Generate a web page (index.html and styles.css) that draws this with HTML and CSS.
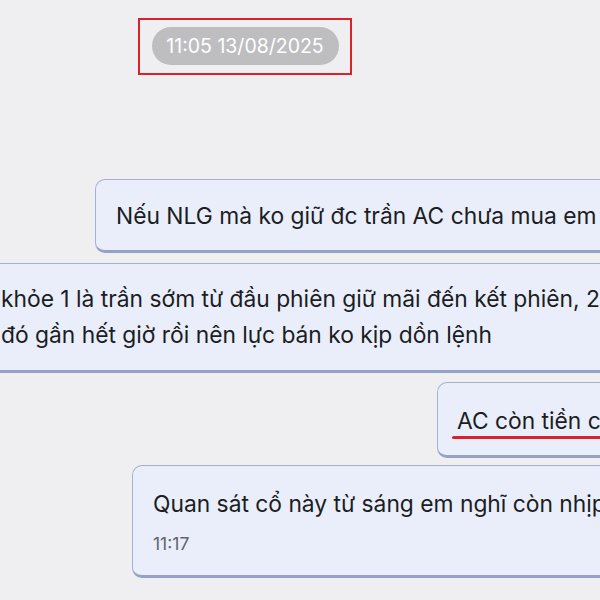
FILE: index.html
```html
<!doctype html>
<html>
  <head>
    <meta charset="utf-8">
    <title>chat</title>
    <link rel="stylesheet" href="styles.css">
  </head>
  <body>
    <main class="chat">
      <div class="stamp-row">
        <div class="stamp-mark">
          <span class="stamp">11:05 13/08/2025</span>
        </div>
      </div>
      <div class="row row-1">
        <div class="bubble b1">Nếu NLG mà ko giữ đc trần AC chưa mua em</div>
      </div>
      <div class="row row-2">
        <div class="bubble b2">
          <p>khỏe 1 là trần sớm từ đầu phiên giữ mãi đến kết phiên, 2</p>
          <p>đó gần hết giờ rồi nên lực bán ko kịp dồn lệnh</p>
        </div>
      </div>
      <div class="row row-3">
        <div class="bubble b3"><span class="marked">AC còn tiền chưa</span></div>
      </div>
      <div class="row row-4">
        <div class="bubble b4">
          <p>Quan sát cổ này từ sáng em nghĩ còn nhịp</p>
          <span class="time">11:17</span>
        </div>
      </div>
    </main>
  </body>
</html>
```

FILE: styles.css
```css
* {
  margin: 0;
  padding: 0;
  box-sizing: border-box;
}

html, body {
  width: 100%;
  height: 100%;
  overflow: hidden;
}

body {
  background-color: #efeff2;
  font-family: Inter, "Noto Sans", sans-serif;
  color: #1b1d22;
}

.chat {
  display: flex;
  flex-direction: column;
  width: 900px;
}

.stamp-row {
  padding-top: 18px;
  padding-left: 138px;
  display: flex;
}

.stamp-mark {
  width: 214px;
  height: 57px;
  border: 2px solid #d9222b;
  display: flex;
  align-items: center;
  justify-content: center;
}

.stamp {
  background-color: #bebec1;
  color: #fff;
  font-size: 19.5px;
  height: 38px;
  width: 187px;
  border-radius: 19px;
  display: flex;
  align-items: center;
  justify-content: center;
  margin-top: -1px;
}

.row {
  display: flex;
}

.bubble {
  background-color: #e9eefa;
  border: 1.5px solid #a6b1d2;
  border-bottom: 3px solid #95a1c6;
  border-radius: 10px;
  font-size: 22.8px;
  line-height: 28px;
  white-space: nowrap;
}

.row-1 {
  margin-top: 104px;
  padding-left: 95px;
}

.b1 {
  height: 74px;
  padding: 22px 0 0 20px;
  width: 600px;
}

.row-2 {
  margin-top: 10px;
  margin-left: -22px;
}

.b2 {
  height: 110px;
  padding: 17px 0 0 22px;
  width: 760px;
  line-height: 36px;
}

.row-3 {
  margin-top: 9px;
  padding-left: 437px;
}

.b3 {
  height: 76px;
  width: 280px;
  padding: 24px 0 0 19px;
}

.marked {
  position: relative;
}

.marked::after {
  content: "";
  position: absolute;
  left: -5px;
  right: -40px;
  bottom: -5px;
  height: 3px;
  border-radius: 2px;
  background-color: #d9222b;
}

.row-4 {
  margin-top: 7px;
  padding-left: 132px;
}

.b4 {
  height: 113px;
  width: 560px;
  padding: 24px 0 0 20px;
  display: flex;
  flex-direction: column;
}

.time {
  margin-top: 15px;
  font-size: 17.5px;
  line-height: 22px;
  color: #60656f;
}
```
